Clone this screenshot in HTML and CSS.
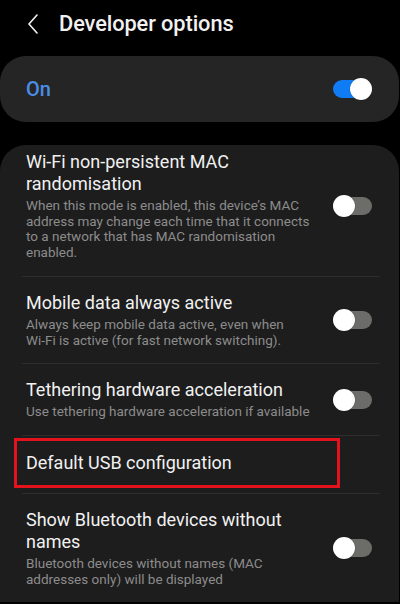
FILE: index.html
```html
<!DOCTYPE html>
<html lang="en">
<head>
  <meta charset="UTF-8" />
  <meta name="viewport" content="width=device-width, initial-scale=1.0"/>
  <title>Developer options</title>
  <link rel="stylesheet" href="styles.css">
</head>
<body>

  <header>
    <button class="back" aria-label="Back">
      <svg width="12" height="20" viewBox="0 0 12 20">
        <path d="M10 1 L2 10 L10 19" fill="none" stroke="#f2f2f2" stroke-width="1.6" stroke-linecap="round" stroke-linejoin="round"/>
      </svg>
    </button>
    <h1>Developer options</h1>
  </header>

  <div class="master card">
    <span class="master-label">On</span>
    <span class="switch on"><span class="thumb"></span></span>
  </div>

  <div class="list card">

    <div class="item first">
      <div class="text">
        <div class="title">Wi-Fi non-persistent MAC randomisation</div>
        <div class="summary">When this mode is enabled, this device’s MAC address may change each time that it connects to a network that has MAC randomisation enabled.</div>
      </div>
      <span class="switch"><span class="thumb"></span></span>
    </div>

    <div class="item">
      <div class="text">
        <div class="title">Mobile data always active</div>
        <div class="summary">Always keep mobile data active, even when<br>Wi-Fi is active (for fast network switching).</div>
      </div>
      <span class="switch"><span class="thumb"></span></span>
    </div>

    <div class="item">
      <div class="text">
        <div class="title">Tethering hardware acceleration</div>
        <div class="summary">Use tethering hardware acceleration if available</div>
      </div>
      <span class="switch"><span class="thumb"></span></span>
    </div>

    <div class="item plain">
      <div class="marked">
        <div class="title">Default USB configuration</div>
      </div>
    </div>

    <div class="item">
      <div class="text">
        <div class="title">Show Bluetooth devices without names</div>
        <div class="summary">Bluetooth devices without names (MAC addresses only) will be displayed</div>
      </div>
      <span class="switch"><span class="thumb"></span></span>
    </div>

  </div>

</body>
</html>
```

FILE: styles.css
```css
:root {
  --bg: #000000;
  --card: #1d1d1d;
  --card-top: #252525;
  --text: #f1f1f1;
  --muted: #8c8c8c;
  --divider: #2e2e2e;
  --blue: #0f7cf5;
  --label-blue: #4a8ee8;
  --off: #6c6c68;
  --mark: #e3121c;
}

* { box-sizing: border-box; }

body {
  margin: 0;
  background: var(--bg);
  color: var(--text);
  font-family: Roboto, 'Noto Sans', sans-serif;
  overflow: hidden;
}

header {
  display: flex;
  align-items: center;
  height: 46px;
  padding-left: 27px;
}

.back {
  background: none;
  border: none;
  padding: 0;
  width: 32px;
  display: flex;
  align-items: center;
  margin-top: 1px;
}

h1 {
  margin: 0;
  font-size: 21.8px;
  font-weight: 500;
  letter-spacing: -0.1px;
}

.card {
  background: var(--card);
  border-radius: 26px;
  width: 399px;
}

.master {
  margin-top: 10px;
  background: var(--card-top);
  height: 66px;
  display: flex;
  align-items: center;
  justify-content: space-between;
  padding: 0 27px 0 26px;
}

.master-label {
  color: var(--label-blue);
  font-size: 20px;
  font-weight: 500;
}

.list {
  margin-top: 23px;
  border-radius: 26px 26px 0 0;
  padding: 0 27px 0 26px;
}

.item {
  display: flex;
  align-items: center;
  justify-content: space-between;
  gap: 10px;
  padding: 15px 0;
}

.item + .item {
  border-top: 1px solid var(--divider);
  margin-left: -4px;
  margin-right: -8px;
  padding-left: 4px;
  padding-right: 8px;
}

.item.first {
  padding-top: 6px;
}

.item.plain {
  padding: 2px 0 5px 4px;
}

.text {
  flex: 1;
}

.title {
  font-size: 18px;
  line-height: 22px;
}

.summary {
  color: var(--muted);
  font-size: 13.5px;
  line-height: 15.7px;
  margin-top: 3px;
}

.marked {
  border: 3px solid var(--mark);
  margin-left: -12px;
  width: 326px;
  padding: 11px 9px;
}

.switch {
  position: relative;
  flex: none;
  width: 39px;
  height: 18px;
  border-radius: 9px;
  background: var(--off);
}

.switch.on {
  background: var(--blue);
}

.thumb {
  position: absolute;
  top: -2px;
  left: 0;
  width: 22px;
  height: 22px;
  border-radius: 50%;
  background: #ffffff;
  box-shadow: 0 0 1px rgba(0,0,0,0.6);
}

.switch.on .thumb {
  left: auto;
  right: 0;
}
```
